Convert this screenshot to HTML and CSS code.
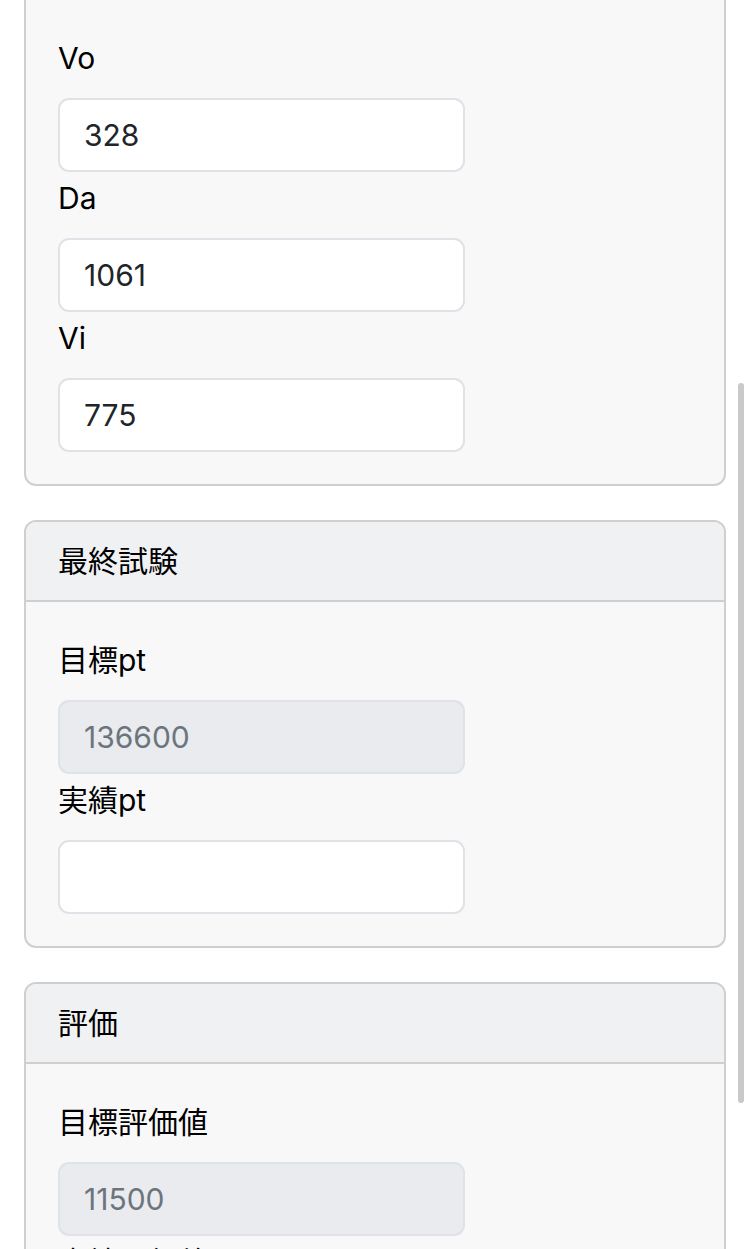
FILE: index.html
```html
<!DOCTYPE html>
<html lang="ja">
<head>
  <meta charset="UTF-8">
  <title>評価入力</title>
  <link rel="stylesheet" href="styles.css">
</head>
<body>

<div class="page">
  <section class="card card-first">
    <div class="card-body">
      <label class="field-label" for="vo">Vo</label>
      <input class="form-input" type="text" id="vo" value="328">
      <label class="field-label" for="da">Da</label>
      <input class="form-input" type="text" id="da" value="1061">
      <label class="field-label" for="vi">Vi</label>
      <input class="form-input" type="text" id="vi" value="775">
    </div>
  </section>

  <section class="card">
    <div class="card-header">最終試験</div>
    <div class="card-body">
      <label class="field-label" for="targetPt">目標pt</label>
      <input class="form-input" type="text" id="targetPt" value="136600" disabled>
      <label class="field-label" for="resultPt">実績pt</label>
      <input class="form-input" type="text" id="resultPt" value="">
    </div>
  </section>

  <section class="card">
    <div class="card-header">評価</div>
    <div class="card-body">
      <label class="field-label" for="targetEval">目標評価値</label>
      <input class="form-input" type="text" id="targetEval" value="11500" disabled>
      <label class="field-label" for="resultEval">実績評価値</label>
      <input class="form-input" type="text" id="resultEval" value="">
    </div>
  </section>
</div>

<div class="scroll-thumb"></div>

</body>
</html>
```

FILE: styles.css
```css
html, body {
  height: 100%;
}
body {
  margin: 0;
  overflow: hidden;
  background-color: #fff;
  color: #000;
  font-family: Inter, "Noto Sans CJK JP", sans-serif;
  font-size: 30px;
}
.page {
  padding: 0 24px;
}
.card {
  background-color: #f8f8f8;
  border: 2px solid #cfcfcf;
  border-radius: 12px;
  margin-bottom: 34px;
  overflow: hidden;
}
.card-first {
  margin-top: -2px;
  border-top-left-radius: 0;
  border-top-right-radius: 0;
}
.card-header {
  background-color: #f0f1f3;
  border-bottom: 2px solid #cfcfcf;
  padding: 15px 32px;
  line-height: 48px;
}
.card-body {
  padding: 32px;
  display: flex;
  flex-direction: column;
  align-items: flex-start;
}
.field-label {
  display: block;
  padding-top: 2px;
  line-height: 48px;
  margin-bottom: 16px;
}
.form-input {
  box-sizing: border-box;
  width: 407px;
  height: 74px;
  padding: 0 24px;
  font-family: Inter, "Noto Sans CJK JP", sans-serif;
  font-size: 30px;
  color: #212529;
  background-color: #fff;
  border: 2px solid #dfe2e6;
  border-radius: 11px;
  outline: none;
}
.form-input:disabled {
  background-color: #e9ebee;
  color: #6c757d;
}
.scroll-thumb {
  position: absolute;
  top: 383px;
  right: 6px;
  width: 6px;
  height: 720px;
  border-radius: 3px;
  background-color: #c9c9c9;
}
```
